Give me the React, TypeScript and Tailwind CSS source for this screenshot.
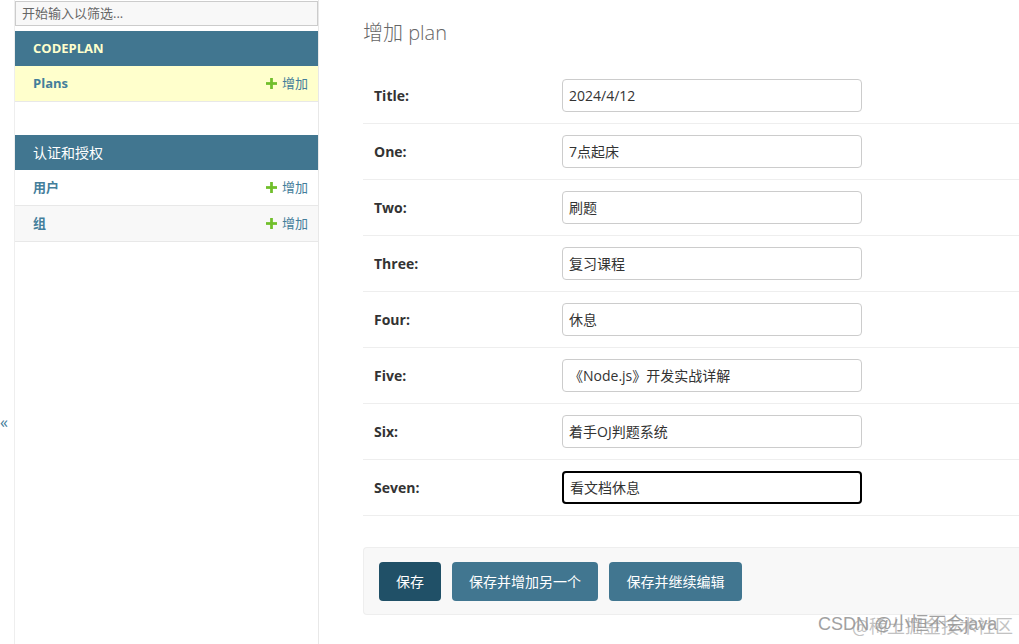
import React from "react";

const font = { fontFamily: '"Open Sans", "Noto Sans CJK SC", sans-serif' };

function Plus() {
  return (
    <svg width="11" height="11" viewBox="0 0 12 12" className="mr-[5px]">
      <rect x="4.5" y="0" width="3" height="12" fill="#70bf2b" />
      <rect x="0" y="4.5" width="12" height="3" fill="#70bf2b" />
    </svg>
  );
}

function ModelRow({ name, bg }: { name: string; bg: string }) {
  return (
    <div className={`flex h-[36px] items-center justify-between border-b border-[#e8e8e8] pl-[18px] pr-[10px] ${bg}`}>
      <span className="text-[13px] font-bold text-[#447e9b]">{name}</span>
      <span className="flex items-center text-[13px] text-[#447e9b]">
        <Plus />
        增加
      </span>
    </div>
  );
}

const rows: [string, string, boolean?][] = [
  ["Title:", "2024/4/12"],
  ["One:", "7点起床"],
  ["Two:", "刷题"],
  ["Three:", "复习课程"],
  ["Four:", "休息"],
  ["Five:", "《Node.js》开发实战详解"],
  ["Six:", "着手OJ判题系统"],
  ["Seven:", "看文档休息", true],
];

export default function App() {
  return (
    <div className="relative flex h-[644px] w-[1019px] overflow-hidden bg-white" style={font}>
      {/* toggle column */}
      <div className="w-[15px] shrink-0 border-r border-[#eee] pt-[412px]">
        <span className="block text-[16px] leading-[20px] text-[#447e9b]">«</span>
      </div>
      {/* sidebar */}
      <div className="w-[304px] shrink-0 border-r border-[#e8e8e8]">
        <div className="mt-[1px] flex h-[25px] items-center border border-[#ccc] bg-[#f8f8f8] px-[6px] text-[13px] text-[#666]">
          开始输入以筛选...
        </div>
        <div className="mt-[5px]">
          <div className="flex h-[35px] items-center bg-[#417690] pl-[18px] text-[13px] font-bold text-[#ffffcc]">
            CODEPLAN
          </div>
          <ModelRow name="Plans" bg="bg-[#ffffcc]" />
        </div>
        <div className="mt-[33px]">
          <div className="flex h-[35px] items-center bg-[#417690] pl-[18px] text-[14px] text-white">
            认证和授权
          </div>
          <ModelRow name="用户" bg="bg-white" />
          <ModelRow name="组" bg="bg-[#f8f8f8]" />
        </div>
      </div>
      {/* content */}
      <div className="flex-1 pl-[44px]">
        <h1 className="mt-[19px] text-[20px] font-light leading-[28px] text-[#666]">增加 plan</h1>
        <div className="mt-[21px]">
          {rows.map(([label, value, focus]) => (
            <div key={label} className="flex h-[56px] items-center border-b border-[#eee] pl-[11px]">
              <div className="w-[188px] text-[14px] font-bold text-[#333]">{label}</div>
              <div
                className={`flex h-[33px] w-[300px] items-center rounded-[4px] px-[6px] text-[14px] text-[#333] ${
                  focus ? "border-2 border-black px-[5px]" : "border border-[#ccc]"
                }`}
              >
                {value}
              </div>
            </div>
          ))}
        </div>
        <div className="mt-[31px] flex h-[68px] items-center gap-[11px] rounded-l-[4px] border border-r-0 border-[#eee] bg-[#f8f8f8] pl-[15px]">
          <button className="h-[39px] w-[62px] rounded-[4px] bg-[#205067] text-[14px] text-white">保存</button>
          <button className="h-[39px] w-[146px] rounded-[4px] bg-[#417690] text-[14px] text-white">保存并增加另一个</button>
          <button className="h-[39px] w-[133px] rounded-[4px] bg-[#417690] text-[14px] text-white">保存并继续编辑</button>
        </div>
      </div>
      {/* watermark */}
      <div className="absolute left-[818px] top-[612px] text-[18px] leading-[24px] text-[#8a8a8a] opacity-80" style={{ fontFamily: '"Liberation Sans", "Noto Sans CJK SC", sans-serif' }}>
        CSDN @小恒不会java
      </div>
      <div className="absolute left-[852px] top-[613px] text-[18px] leading-[24px] text-[#9a9a9a] opacity-60" style={{ fontFamily: '"Noto Sans CJK SC", sans-serif' }}>
        @稀土掘金技术社区
      </div>
    </div>
  );
}
